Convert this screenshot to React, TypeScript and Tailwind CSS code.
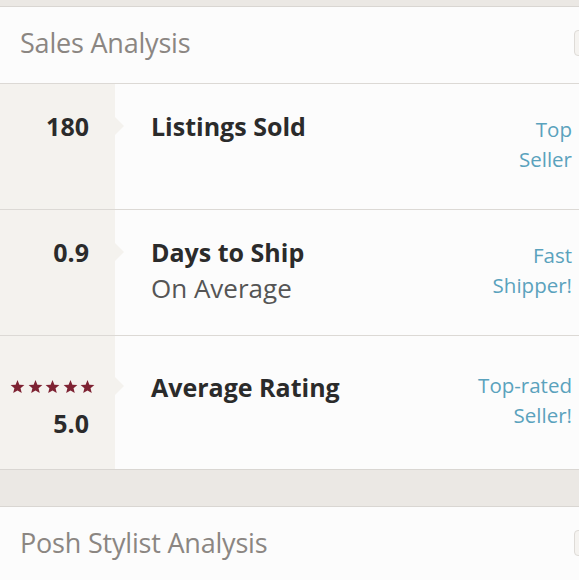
import React from "react";

const font = { fontFamily: "'Open Sans', Lato, sans-serif" };

function Star() {
  return (
    <svg width="15" height="14" viewBox="0 0 24 23" fill="#7e2333">
      <path d="M12 0l3.1 7.6 8.2.6-6.3 5.3 2 8L12 17.2 4.9 21.5l2-8L.7 8.2l8.2-.6z" />
    </svg>
  );
}

interface Row { value?: string; stars?: boolean; title: string; sub?: string; badge: string[]; h: string; }

const rows: Row[] = [
  { value: "180", title: "Listings Sold", badge: ["Top", "Seller"], h: "h-[126px]" },
  { value: "0.9", title: "Days to Ship", sub: "On Average", badge: ["Fast", "Shipper!"], h: "h-[126px]" },
  { value: "5.0", stars: true, title: "Average Rating", badge: ["Top-rated", "Seller!"], h: "h-[133px]" },
];

export default function App() {
  return (
    <div className="w-[579px] h-[580px] overflow-hidden bg-[#ebe8e4]" style={font}>
      <div className="h-[6px]" />
      {/* Sales card */}
      <div className="bg-[#fcfcfc] border-y border-[#d9d6d2]">
        <div className="h-[77px] flex items-center justify-between pl-5 border-b border-[#dcd9d5]">
          <h2 className="text-[27px] text-[#8b8682] font-medium tracking-[-0.2px] -mt-[3px]">Sales Analysis</h2>
          <div className="w-[14px] h-[26px] rounded-[4px] border border-[#dedbd7] bg-[#f5f3f0] -mr-[9px] -mt-[5px]" />
        </div>
        {rows.map((r, i) => (
          <div key={i} className={`flex ${r.h} ${i < rows.length - 1 ? "border-b border-[#dcd9d5]" : ""}`}>
            <div className="relative w-[115px] shrink-0 bg-[#f4f2ee] flex flex-col items-end pr-[26px] pt-[27px]">
              {r.stars ? (
                <>
                  <div className="flex gap-[2.5px] mr-[-6px] mt-[17px]">
                    <Star /><Star /><Star /><Star /><Star />
                  </div>
                  <div className="text-[25px] font-bold text-[#2b2b2b] leading-[30px] mt-[14px]">{r.value}</div>
                </>
              ) : (
                <div className="text-[25px] font-bold text-[#2b2b2b] leading-[30px]">{r.value}</div>
              )}
              <div className={`absolute left-full ${r.stars ? "top-[41px]" : "top-[33px]"} w-0 h-0 border-y-[9px] border-y-transparent border-l-[9px] border-l-[#f4f2ee]`} />
            </div>
            <div className={`flex-1 pl-9 ${r.stars ? "pt-[36px]" : "pt-[27px]"}`}>
              <div className="text-[25px] font-bold text-[#2b2b2b] leading-[30px]">{r.title}</div>
              {r.sub && <div className="text-[26px] text-[#555] leading-[30px] mt-[6px]">{r.sub}</div>}
            </div>
            <div className={`pr-[7px] text-right text-[20.5px] leading-[29.5px] text-[#5aa2bd] ${r.stars ? "pt-[35px]" : "pt-[31px]"}`}>
              {r.badge.map((b) => <div key={b}>{b}</div>)}
            </div>
          </div>
        ))}
      </div>
      <div className="h-[36px]" />
      {/* Posh stylist card */}
      <div className="bg-[#fcfcfc] border-t border-[#d9d6d2]">
        <div className="h-[76px] flex items-center justify-between pl-5">
          <h2 className="text-[27px] text-[#8b8682] font-medium tracking-[-0.2px] -mt-[3px]">Posh Stylist Analysis</h2>
          <div className="w-[14px] h-[26px] rounded-[4px] border border-[#dedbd7] bg-[#f5f3f0] -mr-[9px] -mt-[5px]" />
        </div>
      </div>
    </div>
  );
}
